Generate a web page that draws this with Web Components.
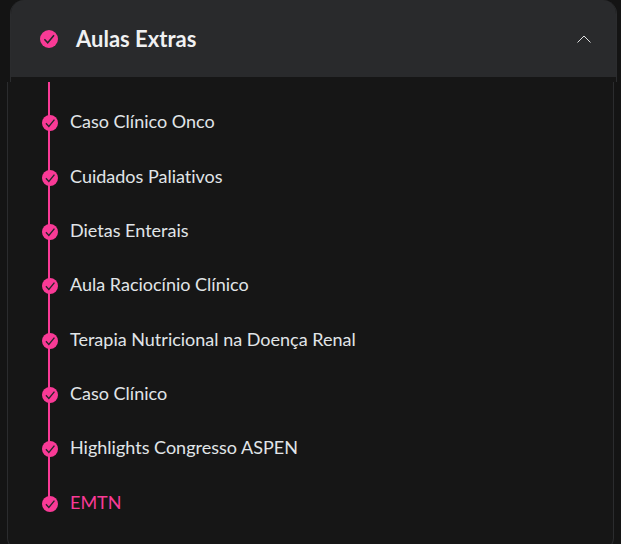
<!DOCTYPE html>
<html lang="pt-BR">
<head>
<meta charset="utf-8">
<meta name="viewport" content="width=device-width, initial-scale=1">
<title>Aulas Extras</title>
<style>
    body {
        margin: 0;
        background: #141414;
        color: #e1e5e8;
        font-family: Lato, "Open Sans", sans-serif;
        font-variant-ligatures: none;
        --accent: #f93a96;
        --header: #292a2c;
        --panel: #161616;
        --border: #2b2c2e;
    }
</style>
</head>
<body>
<course-module heading="Aulas Extras">
    <lesson-item>Caso Clínico Onco</lesson-item>
    <lesson-item>Cuidados Paliativos</lesson-item>
    <lesson-item>Dietas Enterais</lesson-item>
    <lesson-item>Aula Raciocínio Clínico</lesson-item>
    <lesson-item>Terapia Nutricional na Doença Renal</lesson-item>
    <lesson-item>Caso Clínico</lesson-item>
    <lesson-item>Highlights Congresso ASPEN</lesson-item>
    <lesson-item active>EMTN</lesson-item>
</course-module>

<script>
const checkTemplate = document.createElement('template');
checkTemplate.innerHTML = `
<style>
    :host {
        display: block;
        flex: none;
        width: 16px;
        height: 16px;
    }

    svg {
        display: block;
        width: 100%;
        height: 100%;
    }

    circle {
        fill: var(--accent);
    }

    path {
        fill: none;
        stroke: #25252a;
        stroke-width: 1.5;
    }
</style>

<svg viewBox="0 0 18 18" aria-hidden="true">
    <circle cx="9" cy="9" r="9"></circle>
    <path d="M4.4 9.3 7.7 12.8 14 5.2"></path>
</svg>
`;

class CheckMark extends HTMLElement {
    constructor() {
        super();
        this.root = this.attachShadow({ mode: 'open' });
        this.root.appendChild(checkTemplate.content.cloneNode(true));
    }
}

customElements.define('check-mark', CheckMark);

const lessonTemplate = document.createElement('template');
lessonTemplate.innerHTML = `
<style>
    :host {
        display: flex;
        position: relative;
    }

    /* progress line behind the check marks */
    :host::before {
        content: "";
        position: absolute;
        top: 0;
        bottom: 0;
        left: 40px;
        width: 2px;
        background: var(--accent);
    }

    :host(:first-child)::before {
        top: -14px;
    }

    :host(:last-child)::before {
        bottom: 50%;
    }

    a {
        display: flex;
        align-items: center;
        gap: 12px;
        flex: 1;
        min-height: 48px;
        padding-left: 34px;
        position: relative;
        color: inherit;
        font-size: 18px;
        line-height: 24px;
        text-decoration: none;
    }

    span {
        padding-bottom: 4px;
    }

    :host([active]) a {
        color: var(--accent);
    }
</style>

<a href="#"><check-mark></check-mark><span><slot></slot></span></a>
`;

class LessonItem extends HTMLElement {
    constructor() {
        super();
        this.root = this.attachShadow({ mode: 'open' });
        this.root.appendChild(lessonTemplate.content.cloneNode(true));

        this.$link = this.root.querySelector('a');
        this.$link.addEventListener('click', (e) => {
            e.preventDefault();
            this.dispatchEvent(new CustomEvent('onSelect', { bubbles: true }));
        });
    }

    static get observedAttributes() {
        return ['active'];
    }

    attributeChangedCallback() {
        if (this.hasAttribute('active')) {
            this.$link.setAttribute('aria-current', 'page');
        } else {
            this.$link.removeAttribute('aria-current');
        }
    }
}

customElements.define('lesson-item', LessonItem);

const moduleTemplate = document.createElement('template');
moduleTemplate.innerHTML = `
<style>
    :host {
        display: flex;
        flex-direction: column;
        min-height: 100vh;
        overflow: hidden;
    }

    .top {
        margin: 0 4px 0 10px;
        padding-bottom: 5px;
        border: 1px solid var(--border);
        border-width: 0 1px;
        border-radius: 14px 14px 0 0;
        background: var(--panel);
        overflow: hidden;
    }

    h2 {
        margin: 0;
    }

    button {
        display: flex;
        align-items: center;
        width: 100%;
        height: 77px;
        padding: 0 25px 0 29px;
        border: 0;
        background: var(--header);
        color: #f0f1f2;
        font: bold 22px/28px Lato, "Open Sans", sans-serif;
        text-align: left;
        cursor: pointer;
    }

    check-mark {
        width: 18px;
        height: 18px;
        margin-right: 18px;
    }

    .title {
        flex: 1;
    }

    .chevron {
        width: 14px;
        height: 8px;
        fill: none;
        stroke: #dfe0e1;
    }

    .collapsed .chevron {
        transform: rotate(180deg);
    }

    /* the rounded bottom edge runs past the window */
    .panel {
        display: grid;
        flex: 1;
        margin: 0 7px -6px;
        padding: 14px 0 18px;
        border: 1px solid var(--border);
        border-top: 0;
        border-radius: 0 0 12px 12px;
        background: var(--panel);
    }

    .list {
        display: grid;
        grid-auto-rows: 1fr;
    }

    .panel[hidden] {
        display: none;
    }
</style>

<div class="top">
    <h2>
        <button type="button" aria-expanded="true" aria-controls="panel">
            <check-mark></check-mark>
            <span class="title"></span>
            <svg class="chevron" viewBox="0 0 14 8" aria-hidden="true"><path d="M.5 7.5 7 1l6.5 6.5"></path></svg>
        </button>
    </h2>
</div>
<div class="panel" id="panel">
    <nav class="list"><slot></slot></nav>
</div>
`;

class CourseModule extends HTMLElement {
    constructor() {
        super();
        this.root = this.attachShadow({ mode: 'open' });
        this.root.appendChild(moduleTemplate.content.cloneNode(true));

        this.$top = this.root.querySelector('.top');
        this.$button = this.root.querySelector('button');
        this.$title = this.root.querySelector('.title');
        this.$panel = this.root.querySelector('.panel');

        this.$button.addEventListener('click', () => this.toggle());

        // Only one lesson is active at a time
        this.addEventListener('onSelect', (e) => {
            this.querySelectorAll('lesson-item').forEach((item) => {
                item.toggleAttribute('active', item === e.target);
            });
        });
    }

    static get observedAttributes() {
        return ['heading'];
    }

    attributeChangedCallback(name, oldValue, newValue) {
        this.$title.textContent = newValue;
    }

    toggle() {
        this.$panel.hidden = !this.$panel.hidden;
        this.$top.classList.toggle('collapsed', this.$panel.hidden);
        this.$button.setAttribute('aria-expanded', String(!this.$panel.hidden));
    }
}

customElements.define('course-module', CourseModule);
</script>
</body>
</html>
